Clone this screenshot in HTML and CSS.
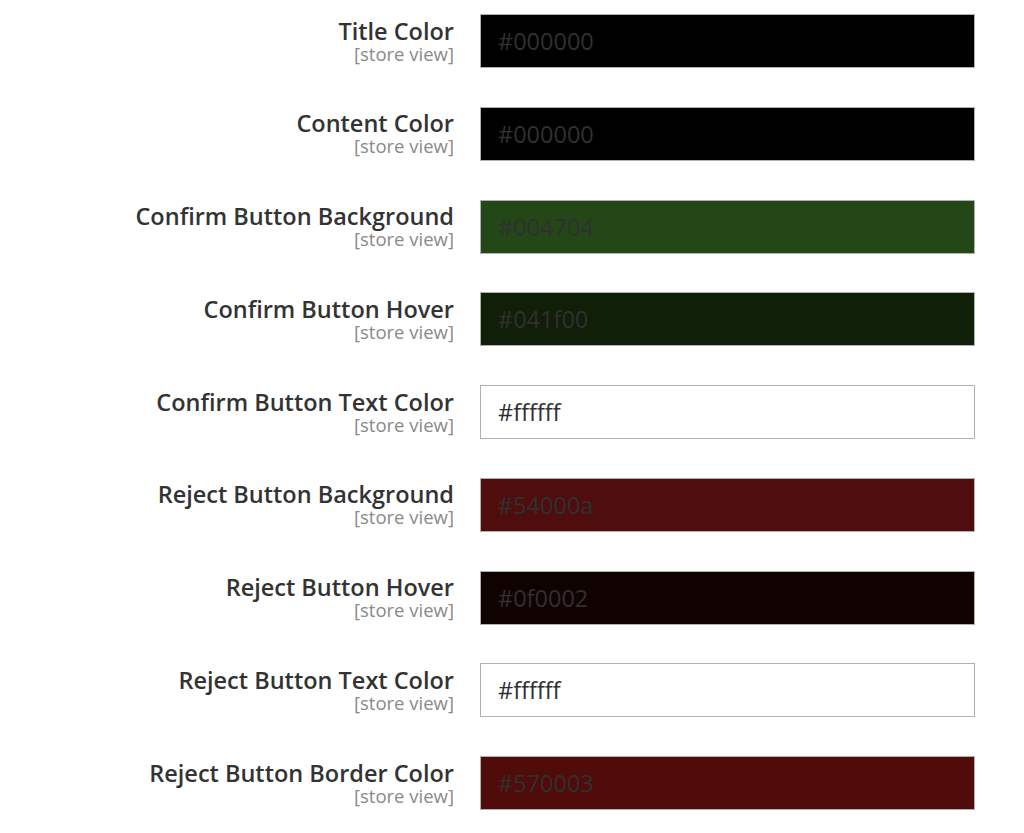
FILE: index.html
```html
<!DOCTYPE html>
<html>
<head>
<meta charset="utf-8">
<link rel="stylesheet" href="styles.css">
</head>
<body>
<div class="form">
  <div class="row">
    <div class="label"><span class="title">Title Color</span><span class="scope">[store view]</span></div>
    <div class="field"><input class="color c-black" value="#000000"></div>
  </div>
  <div class="row">
    <div class="label"><span class="title">Content Color</span><span class="scope">[store view]</span></div>
    <div class="field"><input class="color c-black" value="#000000"></div>
  </div>
  <div class="row">
    <div class="label"><span class="title">Confirm Button Background</span><span class="scope">[store view]</span></div>
    <div class="field"><input class="color c-green" value="#004704"></div>
  </div>
  <div class="row">
    <div class="label"><span class="title">Confirm Button Hover</span><span class="scope">[store view]</span></div>
    <div class="field"><input class="color c-dgreen" value="#041f00"></div>
  </div>
  <div class="row">
    <div class="label"><span class="title">Confirm Button Text Color</span><span class="scope">[store view]</span></div>
    <div class="field"><input class="color c-white" value="#ffffff"></div>
  </div>
  <div class="row">
    <div class="label"><span class="title">Reject Button Background</span><span class="scope">[store view]</span></div>
    <div class="field"><input class="color c-red" value="#54000a"></div>
  </div>
  <div class="row">
    <div class="label"><span class="title">Reject Button Hover</span><span class="scope">[store view]</span></div>
    <div class="field"><input class="color c-dred" value="#0f0002"></div>
  </div>
  <div class="row">
    <div class="label"><span class="title">Reject Button Text Color</span><span class="scope">[store view]</span></div>
    <div class="field"><input class="color c-white" value="#ffffff"></div>
  </div>
  <div class="row">
    <div class="label"><span class="title">Reject Button Border Color</span><span class="scope">[store view]</span></div>
    <div class="field"><input class="color c-red2" value="#570003"></div>
  </div>
</div>
</body>
</html>
```
FILE: styles.css
```css
html, body {
  margin: 0;
  padding: 0;
  background: #ffffff;
  font-family: "Open Sans", "Liberation Sans", sans-serif;
}
.form {
  padding-top: 14px;
}
.row {
  display: grid;
  grid-template-columns: 454px 495px;
  column-gap: 26px;
  height: 92.75px;
}
.label {
  display: flex;
  flex-direction: column;
  align-items: flex-end;
  text-align: right;
  padding-top: 4.5px;
}
.title {
  font-size: 23.5px;
  font-weight: 600;
  color: #333333;
  line-height: 24px;
}
.scope {
  font-size: 18.5px;
  color: #8a8a8a;
  line-height: 22px;
}
.field {
  display: flex;
}
.color {
  box-sizing: border-box;
  width: 495px;
  height: 54px;
  border: 1px solid #b0b0b0;
  padding: 0 0 0 17px;
  margin: 0;
  font-family: "Open Sans", "Liberation Sans", sans-serif;
  font-size: 23.5px;
  color: #303030;
  outline: none;
}
.c-black { background: #000000; }
.c-green { background: #244717; }
.c-dgreen { background: #0f1f08; }
.c-white { background: #ffffff; }
.c-red { background: #4f0d0d; }
.c-dred { background: #110202; }
.c-red2 { background: #4f0c0a; }
```
